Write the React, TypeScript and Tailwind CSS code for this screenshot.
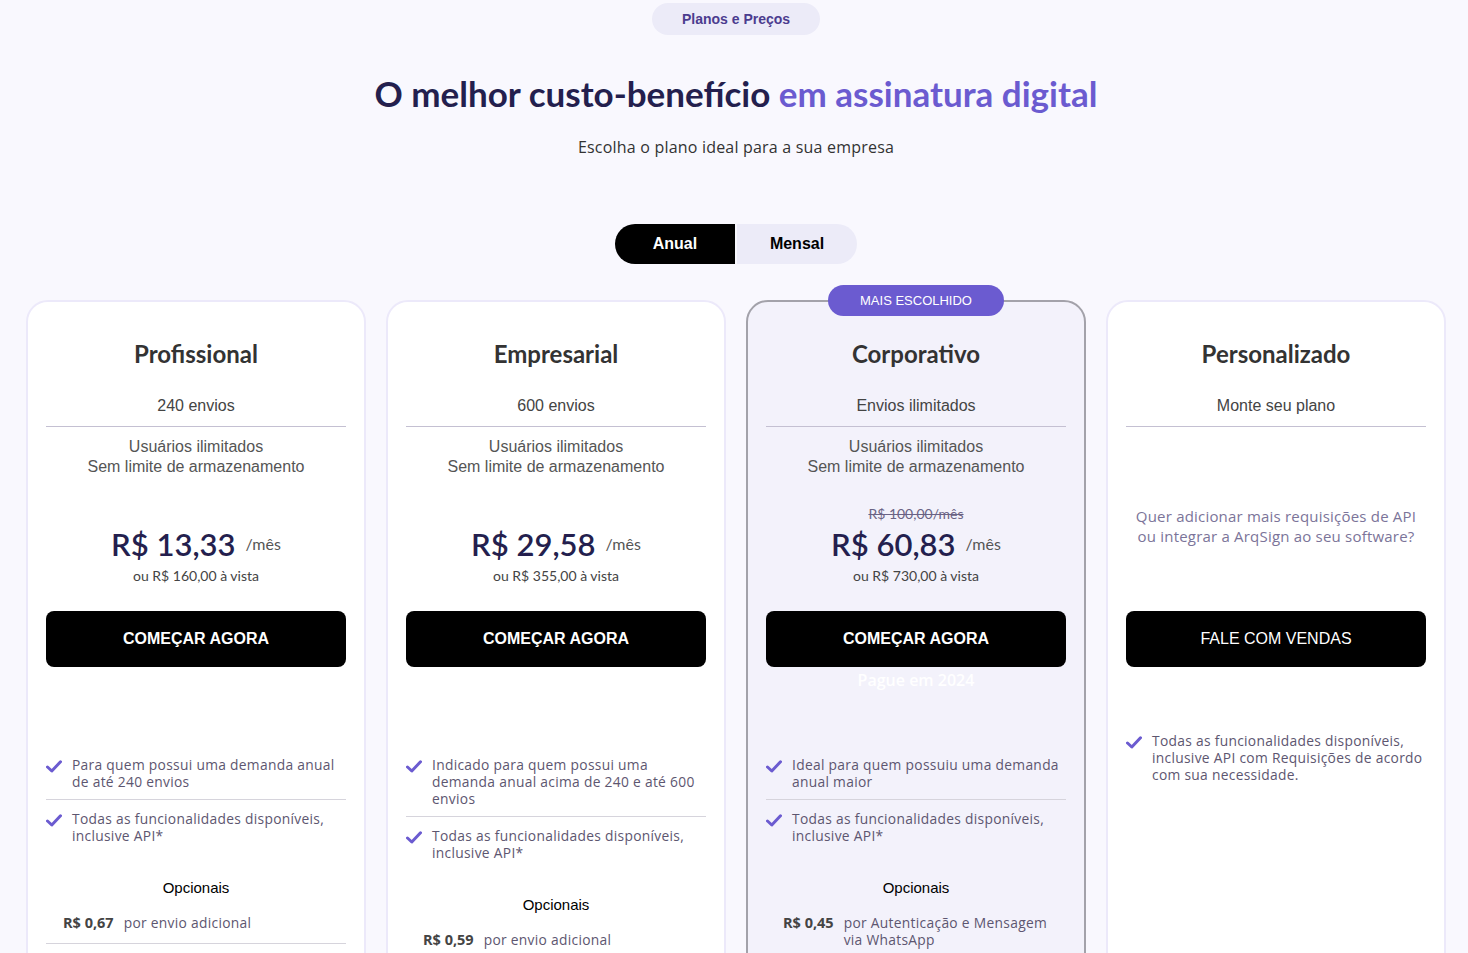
import React from 'react';

//----------------------------------------------------------------------

type Feature = string;

type Plan = {
  name: string;
  envios: string;
  users?: boolean;
  oldPrice?: string;
  price?: string;
  vista?: string;
  note?: string;
  cta: string;
  ctaBold: boolean;
  highlight?: boolean;
  features: Feature[];
  opcional?: { price: string; label: string };
};

const plans: Plan[] = [
  {
    name: 'Profissional',
    envios: '240 envios',
    users: true,
    price: 'R$ 13,33',
    vista: 'ou R$ 160,00 à vista',
    cta: 'COMEÇAR AGORA',
    ctaBold: true,
    features: [
      'Para quem possui uma demanda anual de até 240 envios',
      'Todas as funcionalidades disponíveis, inclusive API*',
    ],
    opcional: { price: 'R$ 0,67', label: 'por envio adicional' },
  },
  {
    name: 'Empresarial',
    envios: '600 envios',
    users: true,
    price: 'R$ 29,58',
    vista: 'ou R$ 355,00 à vista',
    cta: 'COMEÇAR AGORA',
    ctaBold: true,
    features: [
      'Indicado para quem possui uma demanda anual acima de 240 e até 600 envios',
      'Todas as funcionalidades disponíveis, inclusive API*',
    ],
    opcional: { price: 'R$ 0,59', label: 'por envio adicional' },
  },
  {
    name: 'Corporativo',
    envios: 'Envios ilimitados',
    users: true,
    oldPrice: 'R$ 100,00/mês',
    price: 'R$ 60,83',
    vista: 'ou R$ 730,00 à vista',
    cta: 'COMEÇAR AGORA',
    ctaBold: true,
    highlight: true,
    features: [
      'Ideal para quem possuiu uma demanda anual maior',
      'Todas as funcionalidades disponíveis, inclusive API*',
    ],
    opcional: { price: 'R$ 0,45', label: 'por Autenticação e Mensagem via WhatsApp' },
  },
  {
    name: 'Personalizado',
    envios: 'Monte seu plano',
    note: 'Quer adicionar mais requisições de API ou integrar a ArqSign ao seu software?',
    cta: 'FALE COM VENDAS',
    ctaBold: false,
    features: [
      'Todas as funcionalidades disponíveis, inclusive API com Requisições de acordo com sua necessidade.',
    ],
  },
];

const CheckIcon = () => (
  <svg width="16" height="13" viewBox="0 0 16 13" className="shrink-0 mt-[4px]">
    <path
      d="M1.5 7 L5.8 11 L14.5 1.8"
      fill="none"
      stroke="#6b5bd0"
      strokeWidth="3"
      strokeLinecap="round"
      strokeLinejoin="round"
    />
  </svg>
);

function PlanCard({ plan }: { plan: Plan }) {
  return (
    <div
      className={
        plan.highlight
          ? 'relative rounded-[22px] border-2 border-[#a3a2aa] bg-[#f3f2fb] px-[18px] pt-[34px]'
          : 'relative rounded-[22px] border-2 border-[#ece9fa] bg-white px-[18px] pt-[34px]'
      }
    >
      {plan.highlight && (
        <div className="absolute left-1/2 top-[-17px] -translate-x-1/2 w-[176px] h-[31px] rounded-full bg-[#6b5bd0] flex items-center justify-center text-white text-[13px] font-['Liberation_Sans',sans-serif]">
          MAIS ESCOLHIDO
        </div>
      )}
      <h2 className="text-center text-[24px] leading-[36px] font-bold text-[#333] font-['Lato',sans-serif]">
        {plan.name}
      </h2>
      <p className="mt-[24px] text-center text-[16px] leading-[20px] text-[#444] font-['Liberation_Sans',sans-serif]">
        {plan.envios}
      </p>
      <div className="mt-[10px] h-px bg-[#c4c0d2]" />
      {plan.users ? (
        <>
          <div className="h-[77px] pt-[10px] text-center text-[16px] leading-[20px] text-[#555] font-['Liberation_Sans',sans-serif]">
            <p>Usuários ilimitados</p>
            <p>Sem limite de armazenamento</p>
          </div>
          <div className="h-[18px] flex items-center justify-center">
            {plan.oldPrice && (
              <span className="text-[14px] text-[#6a6384] line-through font-['Lato',sans-serif]">
                {plan.oldPrice}
              </span>
            )}
          </div>
          <div className="mt-[3px] flex items-center justify-center gap-[10px] font-['Lato',sans-serif]">
            <span className="text-[31px] leading-[38px] font-semibold text-[#241f4e]">
              {plan.price}
            </span>
            <span className="text-[16px] leading-[20px] text-[#555]">/mês</span>
          </div>
          <p className="mt-[4px] text-center text-[14px] leading-[18px] text-[#444] font-['Lato',sans-serif]">
            {plan.vista}
          </p>
        </>
      ) : (
        <div className="h-[158px] flex items-center justify-center pt-[39px]">
          <p className="text-center text-[15px] leading-[20px] tracking-[0.2px] text-[#7b7499] font-['Open_Sans',sans-serif]">
            {plan.note}
          </p>
        </div>
      )}
      <button className="mt-[26px] w-full h-[56px] rounded-[8px] bg-black text-white text-[16px] font-['Liberation_Sans',sans-serif]">
        <span className={plan.ctaBold ? 'font-bold' : 'font-normal'}>{plan.cta}</span>
      </button>
      {plan.highlight ? (
        <p className="h-[80px] pt-[2px] text-center text-[16px] leading-[22px] font-semibold text-white font-['Open_Sans',sans-serif]">
          Pague em 2024
        </p>
      ) : (
        <div className={plan.users ? 'h-[80px]' : 'h-[55px]'} />
      )}
      <ul className="flex flex-col">
        {plan.features.map((f, i) => (
          <li
            key={i}
            className={
              i < plan.features.length - 1
                ? 'flex gap-[10px] pt-[9px] pb-[9px] border-b border-[#d6d4dc]'
                : 'flex gap-[10px] pt-[10px] pb-[9px]'
            }
          >
            <CheckIcon />
            <span className="text-[13.8px] leading-[17px] tracking-[0.3px] text-[#5d5670] font-['Open_Sans',sans-serif]">
              {f}
            </span>
          </li>
        ))}
      </ul>
      {plan.opcional && (
        <div className="mt-[26px]">
          <p className="text-center text-[15px] leading-[18px] text-black font-['Liberation_Sans',sans-serif]">
            Opcionais
          </p>
          <div className="mt-[17px] flex gap-[10px] px-[17px] pb-[12px] border-b border-[#d6d4dc]">
            <span className="shrink-0 text-[14.5px] leading-[17px] font-bold text-[#444] font-['Open_Sans',sans-serif]">
              {plan.opcional.price}
            </span>
            <span className="text-[13.8px] leading-[17px] tracking-[0.3px] text-[#5d5670] font-['Open_Sans',sans-serif]">
              {plan.opcional.label}
            </span>
          </div>
          <div className="h-[40px]" />
        </div>
      )}
    </div>
  );
}

export default function App() {
  const [anual, setAnual] = React.useState(true);

  return (
    <div className="min-h-screen w-full bg-[#f9f8fe] pt-[3px] pl-[4px]">
      <div className="flex justify-center">
        <span className="h-[32px] w-[168px] rounded-full bg-[#ecebf8] flex items-center justify-center text-[14px] font-bold text-[#4b3c8f] font-['Liberation_Sans',sans-serif]">
          Planos e Preços
        </span>
      </div>
      <h1 className="mt-[36px] text-center text-[35px] leading-[44px] font-bold text-[#241f4e] font-['Lato',sans-serif]">
        O melhor custo-benefício <span className="text-[#6b5bd0]">em assinatura digital</span>
      </h1>
      <p className="mt-[22px] text-center text-[16px] leading-[20px] font-medium tracking-[0.2px] text-[#333] font-['Open_Sans',sans-serif]">
        Escolha o plano ideal para a sua empresa
      </p>
      <div className="mt-[67px] flex justify-center gap-[2px]">
        <button
          onClick={() => setAnual(true)}
          className={
            anual
              ? 'w-[120px] h-[40px] rounded-l-full bg-black text-white text-[16px] font-bold font-["Liberation_Sans",sans-serif]'
              : 'w-[120px] h-[40px] rounded-l-full bg-[#ecebf8] text-black text-[16px] font-bold font-["Liberation_Sans",sans-serif]'
          }
        >
          Anual
        </button>
        <button
          onClick={() => setAnual(false)}
          className={
            !anual
              ? 'w-[120px] h-[40px] rounded-r-full bg-black text-white text-[16px] font-bold font-["Liberation_Sans",sans-serif]'
              : 'w-[120px] h-[40px] rounded-r-full bg-[#ecebf8] text-black text-[16px] font-bold font-["Liberation_Sans",sans-serif]'
          }
        >
          Mensal
        </button>
      </div>
      <div className="mt-[36px] px-[22px] pb-[40px] grid grid-cols-4 gap-[20px]">
        {plans.map((p) => (
          <PlanCard key={p.name} plan={p} />
        ))}
      </div>
    </div>
  );
}
